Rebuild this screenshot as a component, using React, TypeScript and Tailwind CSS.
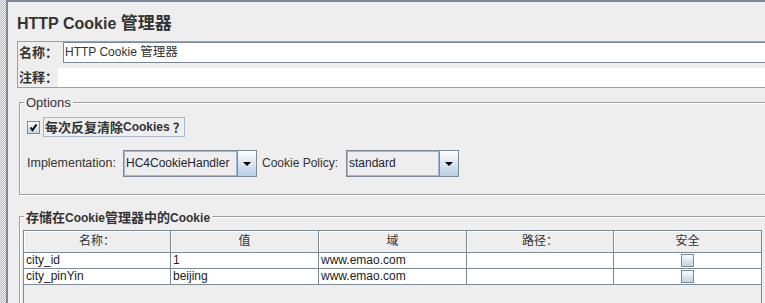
import React from "react";

function Arrow() {
  return (
    <svg width="8" height="4" viewBox="0 0 8 4">
      <polygon points="0,0 8,0 4,4" fill="#000000" />
    </svg>
  );
}

function Combo({ w, text }: { w: string; text: string }) {
  return (
    <div className={`flex h-[27px] border border-[#7a8a99] ${w}`}>
      <div className="flex-1 flex items-center bg-[#eeeeee] shadow-[inset_0_0_0_1px_#a3b8cc] pl-[2px] text-[12px] leading-[15px] text-[#222233]">
        {text}
      </div>
      <div className="w-[19px] border-l border-[#7a8a99] flex items-center justify-center bg-[linear-gradient(180deg,#ffffff_0%,#dde8f3_45%,#b8cfe5_100%)]">
        <Arrow />
      </div>
    </div>
  );
}

function SmallCheck({ checked }: { checked?: boolean }) {
  return (
    <div className="w-[13px] h-[13px] border border-[#7a8a99] bg-[linear-gradient(180deg,#ffffff_0%,#dce6f0_50%,#c4d4e4_100%)] flex items-center justify-center">
      {checked ? (
        <svg width="9" height="9" viewBox="0 0 9 9">
          <path d="M1.5 4.5 L3.5 7 L7.5 1.5" stroke="#000000" strokeWidth="2" fill="none" />
        </svg>
      ) : null}
    </div>
  );
}

const rows = [
  ["city_id", "1", "www.emao.com", ""],
  ["city_pinYin", "beijing", "www.emao.com", ""],
];

export default function App() {
  return (
    <div className='w-[765px] h-[303px] overflow-hidden flex bg-[#eeeeee] font-["Liberation_Sans","Noto_Sans_CJK_SC",sans-serif] text-[#333333]'>
      <div className="w-[6px] shrink-0 h-full bg-[image:repeating-conic-gradient(#b4c0cc_0%_25%,#eeeeee_0%_50%)] bg-[length:2px_2px]" />
      <div className="w-[800px] shrink-0 border-l-2 border-t-2 border-[#7a8a99] flex flex-col">
        <div className="ml-[9px] mt-[11px] leading-[21px] font-bold whitespace-nowrap">
          <span className="text-[16px]">HTTP Cookie </span>
          <span className="text-[17px]">管理器</span>
        </div>

        <div className="ml-[9px] mt-[7px] border border-[#a0a0a0] flex flex-col">
          <div className="flex h-[21px] items-center">
            <div className="w-[45px] pl-[1px] text-[13px] leading-[15px] font-bold">名称：</div>
            <div className="flex-1 h-full border border-[#7a8a99] bg-white text-[12px] leading-[19px] pl-[1px] whitespace-nowrap">
              HTTP Cookie <span className="text-[12.5px]">管理器</span>
            </div>
          </div>
          <div className="flex h-[19px] mt-[5px] items-center">
            <div className="w-[40px] pl-[1px] text-[13px] leading-[15px] font-bold">注释：</div>
            <div className="flex-1 h-full bg-white" />
          </div>
        </div>

        <div className="ml-[11px] mt-[14px] border border-[#a0a0a0] shadow-[inset_1px_1px_0_#ffffff,1px_1px_0_#ffffff] pb-[17px] flex flex-col">
          <div className="-mt-[8px] ml-[4px] w-fit px-[2px] bg-[#eeeeee] text-[13px] leading-[15px]">Options</div>
          <div className="mt-[7px] ml-[7px] h-[20px] flex items-center">
            <SmallCheck checked />
            <div className="ml-[3px] w-[142px] h-[20px] border border-[#a3b8cc] pl-[1px] flex items-center leading-[15px] font-bold whitespace-nowrap overflow-hidden">
              <span className="text-[13px]">每次反复清除</span>
              <span className="text-[12px]">Cookies</span>
              <span className="ml-[3px] text-[13px]">？</span>
            </div>
          </div>
          <div className="mt-[13px] ml-[7px] h-[27px] flex items-center">
            <div className="w-[96px] text-[12.5px] leading-[15px]">Implementation:</div>
            <Combo w="w-[134px]" text="HC4CookieHandler" />
            <div className="ml-[5px] w-[84px] text-[12px] leading-[15px]">Cookie Policy:</div>
            <Combo w="w-[113px]" text="standard" />
          </div>
        </div>

        <div className="ml-[11px] mt-[21px] border border-[#a0a0a0] shadow-[inset_1px_1px_0_#ffffff,1px_1px_0_#ffffff] flex flex-col h-[120px]">
          <div className="-mt-[8px] ml-[4px] w-fit px-[2px] bg-[#eeeeee] leading-[15px] font-bold whitespace-nowrap">
            <span className="text-[13px]">存储在</span>
            <span className="text-[12px]">Cookie</span>
            <span className="text-[13px]">管理器中的</span>
            <span className="text-[12px]">Cookie</span>
          </div>
          <div className="mt-[4px] ml-[3px] w-[739px] h-[100px] border border-[#7a8a99] flex flex-col">
            <div className="grid grid-cols-[147px_148px_148px_147px_147px] h-[22px] border-b border-[#7a8a99]">
              {["名称：", "值", "域", "路径：", "安全"].map((h, i) => (
                <div
                  key={h}
                  className={`${i < 4 ? "border-r border-[#7a8a99]" : ""} bg-[#eeeeee] shadow-[inset_1px_1px_0_#ffffff] text-center text-[12px] leading-[21px]`}
                >
                  {h}
                </div>
              ))}
            </div>
            {rows.map((r) => (
              <div key={r[0]} className="grid grid-cols-[147px_148px_148px_147px_147px] h-[16px] border-b border-[#7a8a99] bg-white">
                {r.map((c, i) => (
                  <div key={i} className="border-r border-[#7a8a99] pl-[2px] text-[12px] leading-[15px] text-[#222222] whitespace-nowrap overflow-hidden">
                    {c}
                  </div>
                ))}
                <div className="flex items-center justify-center">
                  <SmallCheck />
                </div>
              </div>
            ))}
          </div>
        </div>
      </div>
    </div>
  );
}
